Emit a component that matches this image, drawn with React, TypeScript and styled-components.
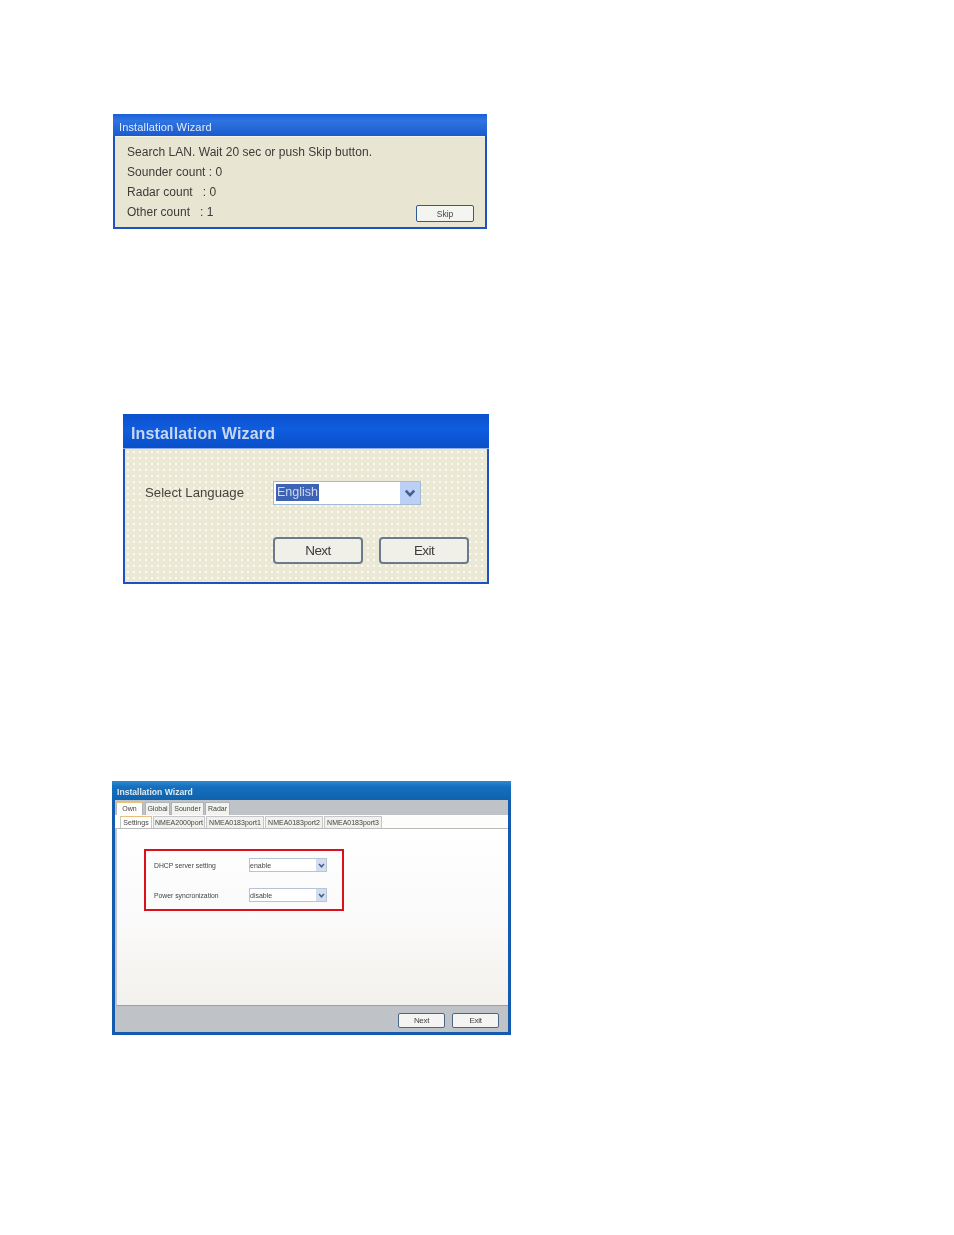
import styled, { createGlobalStyle } from 'styled-components'

const GlobalStyle = createGlobalStyle`
  html, body {
    margin: 0;
    padding: 0;
    background: #fff;
    font-family: "Liberation Sans", Arial, sans-serif;
  }
`

const Chevron = ({ size = 8 }: { size?: number }) => (
  <svg width={size} height={size} viewBox="0 0 10 10" fill="none">
    <path d="M1.5 3 L5 6.8 L8.5 3" stroke="#3f5f8f" strokeWidth="2.2" />
  </svg>
)

const App = () => (
  <>
    <GlobalStyle />
    <PAGE>
      <SEARCH_WINDOW>
        <SEARCH_TITLE>Installation Wizard</SEARCH_TITLE>
        <SEARCH_BODY>
          <SEARCH_LINE>Search LAN. Wait 20 sec or push Skip button.</SEARCH_LINE>
          <SEARCH_LINE>Sounder count : 0</SEARCH_LINE>
          <SEARCH_LINE>Radar count&nbsp;&nbsp; : 0</SEARCH_LINE>
          <SEARCH_LAST>
            <SEARCH_LINE>Other count&nbsp;&nbsp; : 1</SEARCH_LINE>
            <SKIP_BUTTON>Skip</SKIP_BUTTON>
          </SEARCH_LAST>
        </SEARCH_BODY>
      </SEARCH_WINDOW>

      <LANGUAGE_WINDOW>
        <LANGUAGE_TITLE>Installation Wizard</LANGUAGE_TITLE>
        <LANGUAGE_BODY>
          <LANGUAGE_ROW>
            <LANGUAGE_LABEL>Select Language</LANGUAGE_LABEL>
            <LANGUAGE_SELECT>
              <SELECTED_TEXT>English</SELECTED_TEXT>
              <LANGUAGE_ARROW>
                <Chevron size={12} />
              </LANGUAGE_ARROW>
            </LANGUAGE_SELECT>
          </LANGUAGE_ROW>
          <LANGUAGE_BUTTONS>
            <LANGUAGE_BUTTON>Next</LANGUAGE_BUTTON>
            <LANGUAGE_BUTTON>Exit</LANGUAGE_BUTTON>
          </LANGUAGE_BUTTONS>
        </LANGUAGE_BODY>
      </LANGUAGE_WINDOW>

      <SETTINGS_WINDOW>
        <SETTINGS_TITLE>Installation Wizard</SETTINGS_TITLE>
        <SETTINGS_INNER>
          <OUTER_TABS>
            <OUTER_TAB $active $width={27}>Own</OUTER_TAB>
            <OUTER_TAB $width={25}>Global</OUTER_TAB>
            <OUTER_TAB $width={33}>Sounder</OUTER_TAB>
            <OUTER_TAB $width={25}>Radar</OUTER_TAB>
          </OUTER_TABS>
          <INNER_TABS>
            <INNER_TAB $active $width={32}>Settings</INNER_TAB>
            <INNER_TAB $width={52}>NMEA2000port</INNER_TAB>
            <INNER_TAB $width={58}>NMEA0183port1</INNER_TAB>
            <INNER_TAB $width={58}>NMEA0183port2</INNER_TAB>
            <INNER_TAB $width={58}>NMEA0183port3</INNER_TAB>
          </INNER_TABS>
          <SETTINGS_CONTENT>
            <RED_BOX>
              <SETTING_ROW>
                <SETTING_LABEL>DHCP server setting</SETTING_LABEL>
                <SETTING_SELECT>
                  <span>enable</span>
                  <SETTING_ARROW>
                    <Chevron size={7} />
                  </SETTING_ARROW>
                </SETTING_SELECT>
              </SETTING_ROW>
              <SETTING_ROW>
                <SETTING_LABEL>Power syncronization</SETTING_LABEL>
                <SETTING_SELECT>
                  <span>disable</span>
                  <SETTING_ARROW>
                    <Chevron size={7} />
                  </SETTING_ARROW>
                </SETTING_SELECT>
              </SETTING_ROW>
            </RED_BOX>
          </SETTINGS_CONTENT>
          <SETTINGS_FOOTER>
            <FOOTER_BUTTON>Next</FOOTER_BUTTON>
            <FOOTER_BUTTON>Exit</FOOTER_BUTTON>
          </SETTINGS_FOOTER>
        </SETTINGS_INNER>
      </SETTINGS_WINDOW>
    </PAGE>
  </>
)

export default App

const PAGE = styled.main`
  width: 954px;
  height: 1235px;
  padding-top: 114px;
  box-sizing: border-box;
  overflow: hidden;
  background: #fff;
`

/* first window */
const SEARCH_WINDOW = styled.section`
  width: 374px;
  height: 115px;
  margin-left: 113px;
  box-sizing: border-box;
  border: 2px solid #1c52c4;
  border-top: none;
  display: flex;
  flex-direction: column;
  background: #e8e5d3;
  filter: blur(0.4px);
`

const SEARCH_TITLE = styled.header`
  height: 22px;
  margin: 0 -2px;
  padding: 3px 0 0 6px;
  box-sizing: border-box;
  display: flex;
  align-items: center;
  background: linear-gradient(180deg, #1a5fd8 0%, #2f74e0 30%, #1a5ad0 100%);
  color: #e4ecf8;
  font-size: 11px;
  letter-spacing: 0.15px;
`

const SEARCH_BODY = styled.div`
  flex: 1;
  padding: 5px 11px 0 12px;
  display: flex;
  flex-direction: column;
  border-top: 1px solid #f4f2e6;
`

const SEARCH_LINE = styled.div`
  height: 20px;
  line-height: 20px;
  font-size: 12px;
  letter-spacing: 0.03px;
  color: #3c3c38;
  white-space: nowrap;
`

const SEARCH_LAST = styled.div`
  display: flex;
  justify-content: space-between;
  align-items: flex-start;
`

const SKIP_BUTTON = styled.button`
  width: 58px;
  height: 17px;
  margin-top: 3px;
  padding: 0;
  border: 1px solid #2f5a96;
  border-radius: 2px;
  background: #f4f4f0;
  color: #444;
  font-family: inherit;
  font-size: 8.5px;
`

/* second window */
const LANGUAGE_WINDOW = styled.section`
  width: 366px;
  height: 170px;
  margin: 185px 0 0 123px;
  box-sizing: border-box;
  border: 2px solid #1c52c4;
  border-top: none;
  display: flex;
  flex-direction: column;
  background-color: #ece8d6;
  filter: blur(0.6px);
`

const LANGUAGE_TITLE = styled.header`
  height: 35px;
  margin: 0 -2px;
  padding: 6px 0 0 8px;
  box-sizing: border-box;
  display: flex;
  align-items: center;
  background: linear-gradient(180deg, #0d50cc 0%, #0f5de0 45%, #0a4fc8 100%);
  border-bottom: 1px solid #8fb0e8;
  color: #c9d7ee;
  font-size: 16px;
  font-weight: 700;
  letter-spacing: 0.15px;
`

const LANGUAGE_BODY = styled.div`
  flex: 1;
  padding: 31px 18px 0 20px;
  display: flex;
  flex-direction: column;
  background-image: radial-gradient(circle, #fbfaf2 1px, transparent 1.2px);
  background-size: 6px 6px;
`

const LANGUAGE_ROW = styled.div`
  display: flex;
  align-items: center;
  height: 25px;
`

const LANGUAGE_LABEL = styled.div`
  width: 128px;
  font-size: 13.2px;
  color: #45453c;
  white-space: nowrap;
`

const LANGUAGE_SELECT = styled.div`
  width: 148px;
  height: 24px;
  box-sizing: border-box;
  display: flex;
  align-items: center;
  justify-content: space-between;
  padding-left: 2px;
  border: 1px solid #a3bcd4;
  background: #fff;
`

const SELECTED_TEXT = styled.span`
  padding: 1px 1px;
  background: #3f63b4;
  color: #cfd8ee;
  font-size: 12.5px;
  line-height: 15px;
`

const LANGUAGE_ARROW = styled.span`
  width: 20px;
  height: 22px;
  display: flex;
  align-items: center;
  justify-content: center;
  background: #bcd0f6;
`

const LANGUAGE_BUTTONS = styled.div`
  display: flex;
  gap: 16px;
  margin: 32px 0 0 128px;
`

const LANGUAGE_BUTTON = styled.button`
  width: 90px;
  height: 27px;
  padding: 0;
  border: 2px solid #6a7c8c;
  border-radius: 4px;
  background: #f1f0e8;
  color: #3c3c38;
  font-family: inherit;
  font-size: 13.5px;
  letter-spacing: -0.6px;
`

/* third window */
const SETTINGS_WINDOW = styled.section`
  width: 399px;
  height: 254px;
  margin: 197px 0 0 112px;
  box-sizing: border-box;
  border: 3px solid #145aaf;
  border-top: none;
  display: flex;
  flex-direction: column;
  background: #bfc3c8;
  filter: blur(0.4px);
`

const SETTINGS_TITLE = styled.header`
  height: 19px;
  margin: 0 -3px;
  padding: 3px 0 0 5px;
  box-sizing: border-box;
  display: flex;
  align-items: center;
  background: linear-gradient(180deg, #2c8ad0 0%, #1670bd 30%, #0f62ae 100%);
  color: #dfe8f0;
  font-size: 8.6px;
  font-weight: 700;
`

const SETTINGS_INNER = styled.div`
  flex: 1;
  display: flex;
  flex-direction: column;
  min-height: 0;
`

const OUTER_TABS = styled.nav`
  height: 15px;
  padding: 2px 0 0 1px;
  box-sizing: border-box;
  display: flex;
  gap: 1px;
  background: #bfc3c8;
`

const OUTER_TAB = styled.div<{ $active?: boolean; $width: number }>`
  width: ${({ $width }) => $width}px;
  margin-right: ${({ $active }) => ($active ? 1 : 0)}px;
  padding-bottom: 2px;
  box-sizing: border-box;
  display: flex;
  justify-content: center;
  align-items: center;
  font-size: 7px;
  color: #444;
  white-space: nowrap;
  background: ${({ $active }) => ($active ? '#fdfdfb' : '#f2f2ee')};
  border: 1px solid #b0b3b6;
  border-bottom: none;
  border-top: ${({ $active }) => ($active ? '1px solid #e8c07c' : '1px solid #b0b3b6')};
`

const INNER_TABS = styled.nav`
  height: 14px;
  padding: 1px 0 0 5px;
  box-sizing: border-box;
  display: flex;
  gap: 1px;
  background: #fdfdfb;
  border-bottom: 1px solid #b8babc;
`

const INNER_TAB = styled.div<{ $active?: boolean; $width: number }>`
  width: ${({ $width }) => $width}px;
  padding-bottom: 1px;
  box-sizing: border-box;
  display: flex;
  justify-content: center;
  align-items: center;
  font-size: 7px;
  color: #444;
  white-space: nowrap;
  background: ${({ $active }) => ($active ? '#fff' : '#f0f0ec')};
  border: 1px solid #c4c6c8;
  border-bottom: none;
  border-top: ${({ $active }) => ($active ? '1px solid #e8c07c' : '1px solid #c4c6c8')};
`

const SETTINGS_CONTENT = styled.div`
  flex: 1;
  padding: 20px 0 0 27px;
  margin-left: 1px;
  background: linear-gradient(180deg, #ffffff 0%, #fbfafa 50%, #f3f1ed 100%);
  border-left: 1px solid #c4c6c8;
  border-bottom: 1px solid #9c9ea0;
`

const RED_BOX = styled.div`
  width: 200px;
  height: 62px;
  box-sizing: border-box;
  border: 2px solid #dc0f1c;
  padding: 7px 0 0 8px;
  display: flex;
  flex-direction: column;
  gap: 16px;
`

const SETTING_ROW = styled.div`
  display: flex;
  align-items: center;
  height: 14px;
`

const SETTING_LABEL = styled.div`
  width: 95px;
  font-size: 6.8px;
  color: #444;
  white-space: nowrap;
`

const SETTING_SELECT = styled.div`
  width: 78px;
  height: 14px;
  box-sizing: border-box;
  display: flex;
  align-items: center;
  justify-content: space-between;
  border: 1px solid #b6c4d4;
  background: #fff;
  font-size: 7px;
  color: #444;
`

const SETTING_ARROW = styled.span`
  width: 10px;
  height: 12px;
  display: flex;
  align-items: center;
  justify-content: center;
  background: #d2deef;
`

const SETTINGS_FOOTER = styled.footer`
  height: 26px;
  padding: 7px 9px 0 0;
  box-sizing: border-box;
  display: flex;
  justify-content: flex-end;
  gap: 7px;
  background: #bfc3c8;
`

const FOOTER_BUTTON = styled.button`
  width: 47px;
  height: 15px;
  padding: 0;
  border: 1px solid #4a6680;
  border-radius: 2px;
  background: #f4f4f2;
  color: #444;
  font-family: inherit;
  font-size: 8px;
  letter-spacing: -0.3px;
`
